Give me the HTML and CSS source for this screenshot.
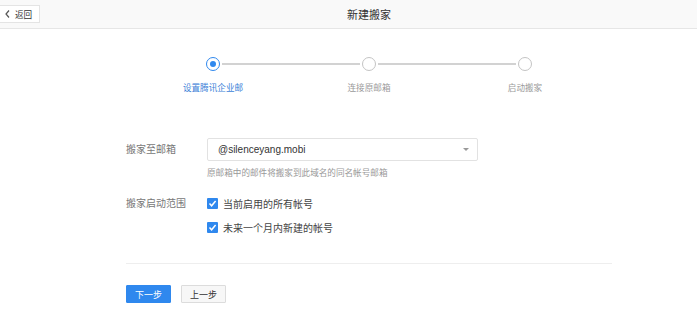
FILE: index.html
```html
<!DOCTYPE html>
<html>
  <head>
    <meta charset="utf-8">
    <link rel="stylesheet" href="styles.css">
  </head>
  <body>
    <div class="page">
      <header class="topbar">
        <a class="back-btn" href="#">
          <svg class="back-icon" width="5" height="8" viewBox="0 0 5 8"><path d="M4 0.5 L1 4 L4 7.5" fill="none" stroke="#555" stroke-width="1.2"/></svg>
          <span>返回</span>
        </a>
        <h1 class="topbar-title">新建搬家</h1>
        <span></span>
      </header>

      <div class="steps">
        <div class="steps-track">
          <span class="step-dot active"></span>
          <span class="step-line"></span>
          <span class="step-dot"></span>
          <span class="step-line"></span>
          <span class="step-dot"></span>
        </div>
        <div class="steps-names">
          <span class="step-name active">设置腾讯企业邮</span>
          <span class="step-name">连接原邮箱</span>
          <span class="step-name">启动搬家</span>
        </div>
      </div>

      <form class="form">
        <div class="form-row">
          <label class="row-label">搬家至邮箱</label>
          <div class="row-field">
            <div class="select">
              <span>@silenceyang.mobi</span>
              <span class="caret"></span>
            </div>
            <p class="hint">原邮箱中的邮件将搬家到此域名的同名帐号邮箱</p>
          </div>
        </div>

        <div class="form-row scope-row">
          <label class="row-label">搬家启动范围</label>
          <div class="row-field checks">
            <label class="check-item">
              <svg class="check-box" width="11" height="11" viewBox="0 0 11 11"><rect width="11" height="11" rx="1" fill="#2f88ee"/><path d="M2.5 5.6 L4.6 7.8 L8.6 3" fill="none" stroke="#fff" stroke-width="1.5"/></svg>
              <span>当前启用的所有帐号</span>
            </label>
            <label class="check-item">
              <svg class="check-box" width="11" height="11" viewBox="0 0 11 11"><rect width="11" height="11" rx="1" fill="#2f88ee"/><path d="M2.5 5.6 L4.6 7.8 L8.6 3" fill="none" stroke="#fff" stroke-width="1.5"/></svg>
              <span>未来一个月内新建的帐号</span>
            </label>
          </div>
        </div>

        <hr class="divider">

        <div class="actions">
          <button type="button" class="btn btn-primary">下一步</button>
          <button type="button" class="btn">上一步</button>
        </div>
      </form>
    </div>
  </body>
</html>
```

FILE: styles.css
```css
* {
  box-sizing: border-box;
}

html {
  background: #fff;
}

body {
  margin: 0;
  font-family: "Liberation Sans", "Noto Sans CJK SC", sans-serif;
  color: #333;
}

/* top bar */
.topbar {
  height: 29px;
  background: #f9f9f9;
  border-bottom: 1px solid #e6e6e6;
  display: grid;
  grid-template-columns: 347px auto 1fr;
  align-items: center;
}

.back-btn {
  justify-self: start;
  display: flex;
  align-items: center;
  gap: 5px;
  height: 18px;
  margin-left: -1px;
  padding: 0 7px 0 5px;
  background: #fff;
  border: 1px solid #e4e4e4;
  font-size: 8.6px;
  color: #333;
  text-decoration: none;
}

.topbar-title {
  margin: 0;
  font-size: 11px;
  font-weight: normal;
  color: #333;
}

/* steps */
.steps {
  width: 468px;
  margin: 28px 0 0 135px;
}

.steps-track {
  width: 326px;
  margin: 0 auto;
  display: flex;
  align-items: center;
}

.step-dot {
  width: 14px;
  height: 14px;
  flex: none;
  border: 1.5px solid #c4c4c4;
  border-radius: 50%;
  background: #fff;
  position: relative;
}

.step-dot.active {
  border-color: #2f88ee;
}

.step-dot.active::after {
  content: '';
  position: absolute;
  left: 2.5px;
  top: 2.5px;
  width: 6px;
  height: 6px;
  border-radius: 50%;
  background: #2f88ee;
}

.step-line {
  flex: 1;
  height: 2px;
  margin: 0 2px;
  background: #d2d2d2;
}

.steps-names {
  display: grid;
  grid-template-columns: repeat(3, 1fr);
  margin-top: 10px;
  text-align: center;
}

.step-name {
  font-size: 8.6px;
  line-height: 14px;
  color: #9a9a9a;
}

.step-name.active {
  color: #3c7fd8;
}

/* form */
.form {
  width: 486px;
  margin: 43px 0 0 126px;
}

.form-row {
  display: flex;
  align-items: flex-start;
}

.scope-row {
  margin-top: 13px;
}

.row-label {
  width: 81px;
  flex: none;
  font-size: 10px;
  line-height: 23px;
  color: #777;
}

.row-field {
  flex: 1;
}

.select {
  width: 271px;
  height: 23px;
  padding: 0 8px 0 10px;
  border: 1px solid #e2e2e2;
  border-radius: 2px;
  display: flex;
  align-items: center;
  justify-content: space-between;
  font-size: 10px;
  color: #333;
}

.caret {
  width: 0;
  height: 0;
  border-left: 3px solid transparent;
  border-right: 3px solid transparent;
  border-top: 3px solid #999;
}

.hint {
  margin: 6px 0 0;
  font-size: 8.6px;
  line-height: 12px;
  color: #999;
}

.checks {
  display: flex;
  flex-direction: column;
  gap: 1px;
}

.check-item {
  height: 23px;
  display: flex;
  align-items: center;
  gap: 5px;
  font-size: 10px;
  color: #444;
}

.divider {
  margin: 24px 0 0;
  border: 0;
  border-top: 1px solid #eee;
}

.actions {
  display: flex;
  gap: 10px;
  margin-top: 21px;
}

.btn {
  width: 45px;
  height: 18px;
  padding: 0;
  border: 1px solid #dcdcdc;
  border-radius: 1px;
  background: #f7f7f7;
  font-family: inherit;
  font-size: 9px;
  color: #333;
}

.btn-primary {
  background: #2f88ee;
  border-color: #2f88ee;
  color: #fff;
}
```
